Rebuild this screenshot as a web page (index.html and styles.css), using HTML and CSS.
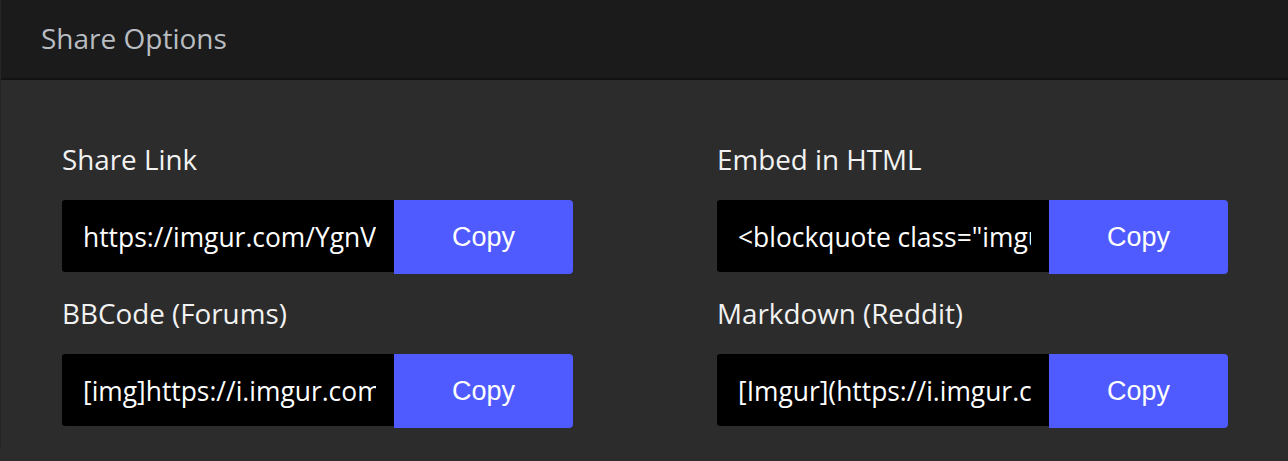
FILE: index.html
```html
<!DOCTYPE html>
<html lang="en">
<head>
<meta charset="utf-8">
<title>Share Options</title>
<link rel="stylesheet" href="styles.css">
</head>
<body>
<div class="panel">
  <header class="panel-header">
    <h2 class="panel-title">Share Options</h2>
  </header>
  <div class="panel-body">
    <div class="field">
      <label class="field-label">Share Link</label>
      <div class="field-row">
        <div class="field-input"><span>https://imgur.com/YgnVzoZ</span></div>
        <button class="copy-btn">Copy</button>
      </div>
    </div>
    <div class="field">
      <label class="field-label">Embed in HTML</label>
      <div class="field-row">
        <div class="field-input"><span>&lt;blockquote class="imgur-embed-pub"</span></div>
        <button class="copy-btn">Copy</button>
      </div>
    </div>
    <div class="field">
      <label class="field-label">BBCode (Forums)</label>
      <div class="field-row">
        <div class="field-input"><span>[img]https://i.imgur.com/YgnVzoZ.png[/img]</span></div>
        <button class="copy-btn">Copy</button>
      </div>
    </div>
    <div class="field">
      <label class="field-label">Markdown (Reddit)</label>
      <div class="field-row">
        <div class="field-input"><span>[Imgur](https://i.imgur.com/YgnVzoZ.png)</span></div>
        <button class="copy-btn">Copy</button>
      </div>
    </div>
  </div>
</div>
</body>
</html>
```

FILE: styles.css
```css
html, body {
  margin: 0;
  padding: 0;
  background: #2c2c2c;
}
body {
  font-family: "Open Sans", "Noto Sans", sans-serif;
  width: 1288px;
  height: 461px;
  overflow: hidden;
}
.panel {
  background: #2c2c2c;
  border-left: 1px solid #262626;
}
.panel-header {
  height: 78px;
  background: #1b1b1b;
  border-bottom: 2px solid #121212;
  display: flex;
  align-items: center;
  padding-left: 40px;
}
.panel-title {
  margin: 0;
  font-weight: 400;
  font-size: 28px;
  color: #b9bdc1;
  position: relative;
  top: -1px;
}
.panel-body {
  display: grid;
  grid-template-columns: 511px 511px;
  column-gap: 144px;
  padding: 61px 0 0 61px;
}
.field {
  margin-bottom: 21px;
}
.field-label {
  display: block;
  font-size: 27.8px;
  line-height: 36px;
  color: #f2f2f2;
  margin-bottom: 23px;
}
.field-row {
  display: flex;
  align-items: flex-start;
}
.field-input {
  flex: 0 0 332px;
  height: 72px;
  background: #000;
  border-radius: 3px 0 0 3px;
  box-sizing: border-box;
  padding: 0 18px 0 21px;
  display: flex;
  align-items: center;
  overflow: hidden;
  white-space: nowrap;
}
.field-input span {
  display: block;
  overflow: hidden;
  width: 100%;
  font-size: 26.4px;
  color: #ffffff;
  position: relative;
  top: 1px;
}
.copy-btn {
  flex: 1 1 auto;
  height: 74px;
  border: none;
  margin: 0;
  padding: 0;
  background: #4f5bff;
  color: #ffffff;
  border-radius: 0 4px 4px 0;
  font-family: "Liberation Sans", Arial, sans-serif;
  font-size: 27px;
  cursor: pointer;
}
```
